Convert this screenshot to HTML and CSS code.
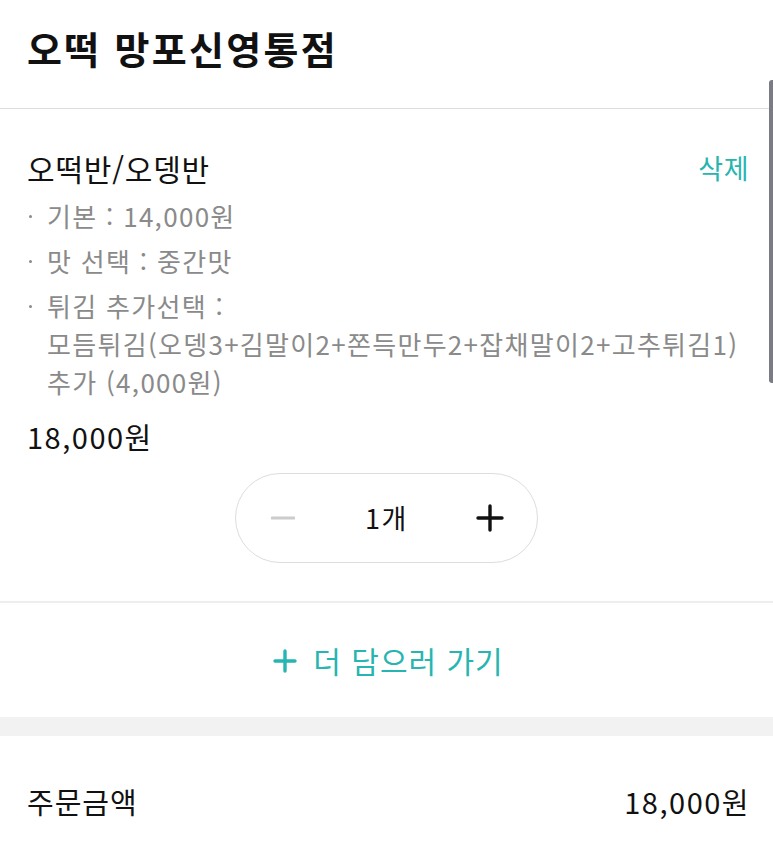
FILE: index.html
```html
<!DOCTYPE html>
<html lang="ko">
<head>
<meta charset="utf-8">
<link rel="stylesheet" href="styles.css">
</head>
<body>
<div class="page">
  <header class="header">
    <h1 class="title">오떡 망포신영통점</h1>
  </header>

  <section class="item">
    <div class="item-head">
      <div class="item-name">오떡반/오뎅반</div>
      <div class="delete">삭제</div>
    </div>
    <ul class="options">
      <li>기본 : 14,000원</li>
      <li>맛 선택 : 중간맛</li>
      <li>튀김 추가선택 :<br>모듬튀김(오뎅3+김말이2+쫀득만두2+잡채말이2+고추튀김1)<br>추가 (4,000원)</li>
    </ul>
    <div class="item-price">18,000원</div>
    <div class="stepper-wrap">
      <div class="stepper">
        <svg class="minus" width="24" height="24" viewBox="0 0 24 24"><path d="M1 12H23" stroke="#cccccc" stroke-width="3" stroke-linecap="round"/></svg>
        <span class="qty">1개</span>
        <svg class="plus" width="28" height="28" viewBox="0 0 28 28"><path d="M2 14H26M14 2V26" stroke="#111111" stroke-width="3.4" stroke-linecap="round"/></svg>
      </div>
    </div>
  </section>

  <div class="more">
    <svg width="24" height="24" viewBox="0 0 24 24"><path d="M2 12H22M12 2V22" stroke="#26b5b0" stroke-width="3.4" stroke-linecap="round"/></svg>
    <span>더 담으러 가기</span>
  </div>

  <div class="band"></div>

  <div class="summary">
    <span class="sum-label">주문금액</span>
    <span class="sum-value">18,000원</span>
  </div>

  <div class="scrollbar"></div>
</div>
</body>
</html>
```

FILE: styles.css
```css
* { box-sizing: border-box; }
html, body { margin: 0; padding: 0; background: #ffffff; }
body {
  font-family: "Noto Sans CJK KR", "Noto Sans", sans-serif;
  color: #111111;
  width: 773px;
  height: 865px;
  overflow: hidden;
}
.page { position: relative; width: 773px; height: 865px; }

.header {
  height: 109px;
  padding: 23px 27px 0;
  border-bottom: 1px solid #dddddd;
}
.title {
  margin: 0;
  font-size: 38px;
  line-height: 50px;
  font-weight: 700;
  letter-spacing: 2.3px;
}

.item {
  padding: 39px 24px 38px 27px;
  border-bottom: 2px solid #eeeeee;
}
.item-head {
  display: flex;
  justify-content: space-between;
  align-items: center;
  height: 40px;
}
.item-name { font-size: 30px; line-height: 40px; letter-spacing: 0.8px; }
.delete { font-size: 27px; line-height: 40px; color: #26b5b0; letter-spacing: 0.5px; }

.options {
  list-style: none;
  margin: 9px 0 0;
  padding: 0;
  color: #8a8a8a;
  font-size: 26px;
  line-height: 38px;
}
.options li {
  position: relative;
  padding-left: 20px;
  margin-bottom: 7px;
  letter-spacing: 1.3px;
}
.options li:last-child { margin-bottom: 0; }
.options li::before {
  content: "";
  position: absolute;
  left: 2px;
  top: 18px;
  width: 3px;
  height: 3px;
  border-radius: 50%;
  background: #8a8a8a;
}

.item-price {
  margin-top: 15px;
  font-size: 29px;
  line-height: 40px;
  letter-spacing: 1.5px;
}

.stepper-wrap {
  display: flex;
  justify-content: center;
  margin-top: 17px;
}
.stepper {
  width: 303px;
  height: 90px;
  margin-left: -3px;
  border: 1px solid #dddddd;
  border-radius: 45px;
  display: flex;
  align-items: center;
  justify-content: space-between;
  padding: 0 33px 0 35px;
}
.qty { font-size: 27px; line-height: 36px; letter-spacing: 1.5px; margin-left: 2px; }

.more {
  height: 114px;
  display: flex;
  align-items: center;
  justify-content: center;
  gap: 16px;
  color: #26b5b0;
  font-size: 30px;
  letter-spacing: 1px;
  padding-left: 4px;
}
.more svg { margin-top: 2px; }

.band { height: 19px; background: #f2f2f2; }

.summary {
  display: flex;
  justify-content: space-between;
  padding: 45px 24px 0 27px;
  font-size: 29px;
  line-height: 40px;
}
.sum-label { letter-spacing: 1px; }
.sum-value { letter-spacing: 1.5px; margin-right: -1px; }

.scrollbar {
  position: absolute;
  right: 0;
  top: 80px;
  width: 4px;
  height: 303px;
  border-radius: 3px 0 0 3px;
  background: #7b7b85;
}
```
